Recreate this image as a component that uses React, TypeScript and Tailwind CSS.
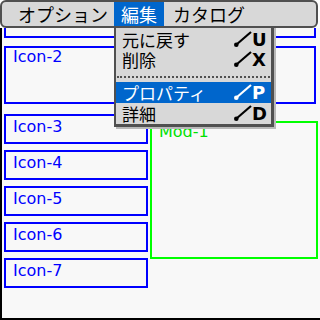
import React from 'react';

// Palm OS style screen: menu bar with an open "編集" menu over an icon list

const CJK = "font-['Noto_Sans_CJK_JP','Noto_Sans',sans-serif]";

const Shortcut: React.FC<{ letter: string }> = ({ letter }) => (
  <div className="flex items-center">
    <svg width="18" height="16" viewBox="0 0 18 16" className="-mt-[2px]">
      <line x1="17" y1="1" x2="2.5" y2="13.5" stroke="currentColor" strokeWidth="2.2" />
      <circle cx="2.3" cy="13.7" r="2.3" fill="currentColor" />
    </svg>
    <span className="w-[15px] text-[18px] font-bold leading-none font-['DejaVu_Sans',sans-serif]">
      {letter}
    </span>
  </div>
);

const MenuRow: React.FC<{ label: string; letter: string; active?: boolean; tall?: boolean }> = ({
  label,
  letter,
  active,
  tall,
}) => (
  <div
    className={`flex items-center justify-between pl-[6px] pr-[4px] ${tall ? 'h-[21px]' : 'h-[20px]'} ${
      active ? 'bg-[#0066cc] text-white' : 'text-black'
    }`}
  >
    <span>{label}</span>
    <Shortcut letter={letter} />
  </div>
);

const IconBox: React.FC<{ label: string }> = ({ label }) => (
  <div className="h-[30px] w-[144px] border-2 border-[#0000ff] pl-[7px] pt-[1px] text-[16px] leading-[20px] text-[#0000ff]">
    {label}
  </div>
);

export default function App() {
  const icons = ['Icon-3', 'Icon-4', 'Icon-5', 'Icon-6', 'Icon-7'];

  return (
    <div className="relative w-[320px] h-[320px] bg-white overflow-hidden">
      {/* menu bar */}
      <div
        className={`h-[28px] w-[318px] rounded-[6px] border-2 border-[#505050] bg-[#d8d8d8] flex text-[18px] leading-[24px] text-black ${CJK}`}
      >
        <span className="ml-[16px]">オプション</span>
        <span className="ml-[6px] px-[7px] bg-[#0066cc] text-white">編集</span>
        <span className="ml-[9px]">カタログ</span>
      </div>

      {/* content */}
      <div className="h-[292px] border-l-2 border-b-2 border-black bg-[#f8f8f8] overflow-hidden pl-[2px] font-['DejaVu_Sans',sans-serif]">
        <div className="-mt-[20px] h-[30px] w-[312px] border-2 border-[#0000ff]" />
        <div className="mt-[8px] h-[58px] w-[312px] border-2 border-[#0000ff] pl-[7px] text-[16px] leading-[18px] text-[#0000ff]">
          Icon-2
        </div>
        <div className="mt-[10px] flex items-start">
          <div className="flex flex-col gap-[6px]">
            {icons.map((name) => (
              <IconBox key={name} label={name} />
            ))}
          </div>
          <div className="ml-[2px] mt-[7px] h-[138px] w-[168px] border-2 border-[#00ff00] pl-[7px] text-[16px] leading-[18px] text-[#00e000]">
            Mod-1
          </div>
        </div>
      </div>

      {/* open menu */}
      <div
        className={`absolute left-[114px] top-[26px] w-[160px] border-l-2 border-t-2 border-r-[3px] border-b-[3px] border-[#505050] bg-[#d8d8d8] shadow-[2px_2px_0_#b8b8b8] pt-[2px] text-[17px] leading-[20px] ${CJK}`}
      >
        <MenuRow label="元に戻す" letter="U" />
        <MenuRow label="削除" letter="X" />
        <div className="h-[12px] pt-[6px] px-[1px]">
          <div className="border-t-2 border-dotted border-[#505050]" />
        </div>
        <MenuRow label="プロパティ" letter="P" active tall />
        <MenuRow label="詳細" letter="D" tall />
      </div>
    </div>
  );
}
